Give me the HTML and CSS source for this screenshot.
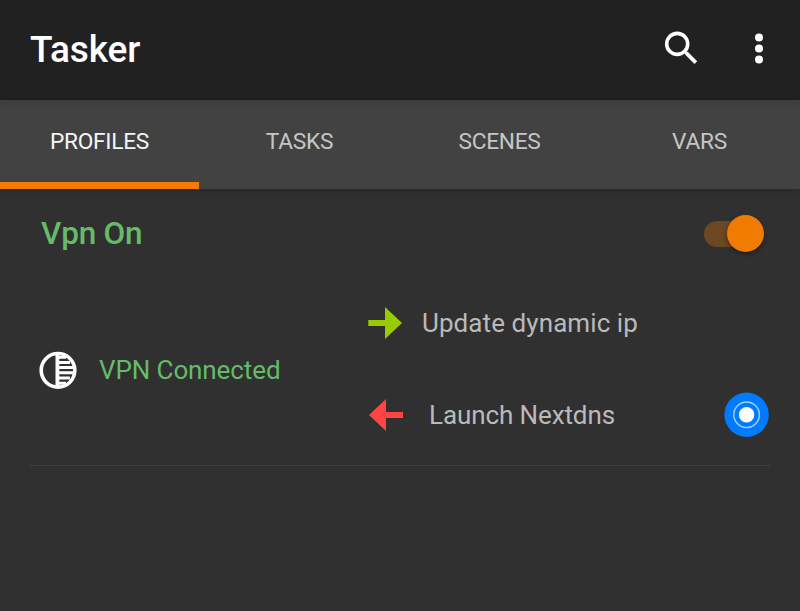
FILE: index.html
```html
<!DOCTYPE html>
<html lang="en">
<head>
<meta charset="utf-8">
<title>Tasker</title>
<link rel="stylesheet" href="styles.css">
</head>
<body>
<header class="appbar">
  <h1 class="title">Tasker</h1>
  <div class="actions">
    <svg class="search" width="36" height="36" viewBox="0 0 36 36" aria-label="Search"><circle cx="14.2" cy="13.9" r="10.5" fill="none" stroke="#fff" stroke-width="3.6"/><path d="M21.5 21.7l3.5 .4 9.2 9.2-2.7 2.7-9.2-9.2-.8-3.1z" fill="#fff"/></svg>
    <svg class="more" width="10" height="32" viewBox="0 0 10 32" fill="#fff" aria-label="More"><circle cx="5" cy="4.4" r="4"/><circle cx="5" cy="15.5" r="4"/><circle cx="5" cy="26.6" r="4"/></svg>
  </div>
</header>
<nav class="tabs">
  <a class="tab active"><span>PROFILES</span></a>
  <a class="tab"><span>TASKS</span></a>
  <a class="tab"><span>SCENES</span></a>
  <a class="tab"><span>VARS</span></a>
</nav>
<main class="profile">
  <div class="profile-head">
    <h2 class="profile-name">Vpn On</h2>
    <div class="switch"><div class="thumb"></div></div>
  </div>
  <div class="profile-body">
    <div class="context">
      <svg width="38" height="38" viewBox="0 0 38 38"><circle cx="19" cy="19.3" r="16.8" fill="none" stroke="#fff" stroke-width="3.6"/><path d="M16.5 3h3.8v32h-3.8z" fill="#fff"/><path d="M20 6.3h7M20 11.5h11M20 16.6h14M20 21.8h14M20 27h11M20 32.2h7" stroke="#fff" stroke-width="3"/></svg>
      <span class="context-name">VPN Connected</span>
    </div>
    <div class="tasks">
      <div class="task">
        <svg width="34" height="34" viewBox="0 0 34 34"><path d="M.3 14H17V1L34 17 17 33V20H.3z" fill="#99cc00"/></svg>
        <span class="task-name enter">Update dynamic ip</span>
      </div>
      <div class="task">
        <svg width="35" height="34" viewBox="0 0 35 34"><path d="M35 14H18V1L1 17 18 33V20H35z" fill="#ff4444"/></svg>
        <span class="task-name exit">Launch Nextdns</span>
        <svg class="touch" width="46" height="46" viewBox="0 0 46 46"><circle cx="22.6" cy="22.8" r="22.2" fill="#007bff"/><circle cx="22.6" cy="22.8" r="12.8" fill="none" stroke="#a6d2ff" stroke-width="1.4"/><circle cx="22.6" cy="22.8" r="7.7" fill="#fff"/></svg>
      </div>
    </div>
  </div>
</main>
</body>
</html>
```
FILE: styles.css
```css
* { box-sizing: border-box; }
body {
  margin: 0;
  height: 611px;
  overflow: hidden;
  background: #303030;
  color: #bababa;
  font-family: Roboto, "Liberation Sans", sans-serif;
}
h1, h2 { margin: 0; font-weight: 500; }
svg { display: block; flex: none; }
.appbar {
  height: 100px;
  padding: 0 36px 0 30px;
  display: flex;
  align-items: center;
  justify-content: space-between;
  background: #212121;
}
.title { font-size: 37px; line-height: 44px; letter-spacing: -.15px; color: #fff; }
.actions { display: flex; align-items: center; gap: 55px; padding-bottom: 4px; }
.more { margin-top: 1px; }
.tabs {
  height: 89px;
  display: grid;
  grid-template-columns: repeat(4, 1fr);
  background: linear-gradient(#3c3c3c, #424242 8px);
  box-shadow: 0 2px 8px rgba(0, 0, 0, .2);
}
.tab {
  display: flex;
  justify-content: center;
  padding: 28px 1px 0 0;
  font-size: 22.7px;
  line-height: 28px;
  letter-spacing: -.25px;
  color: #c6c6c6;
}
.tab.active {
  color: #f5f5f5;
  background: linear-gradient(#f57c00, #f57c00) bottom left / 199px 7.5px no-repeat;
}
.profile {
  margin: 0 30px;
  height: 277px;
  border-bottom: 1px solid #404040;
}
.profile-head {
  height: 89px;
  padding: 0 6px 0 11px;
  display: flex;
  align-items: center;
  justify-content: space-between;
}
.profile-name { font-size: 31.5px; line-height: 38px; letter-spacing: -.2px; color: #66bb6a; }
.switch {
  width: 60px;
  height: 26px;
  border-radius: 13px;
  background: #6b4722;
  display: flex;
  align-items: center;
  justify-content: flex-end;
}
.thumb {
  width: 37px;
  height: 37px;
  border-radius: 50%;
  background: #f07b00;
  box-shadow: 0 2px 4px rgba(0, 0, 0, .4);
}
.profile-body { display: grid; grid-template-columns: 338px 402px; height: 184px; }
.context { display: flex; align-items: center; gap: 22px; padding-left: 9px; }
.context-name { font-size: 26px; line-height: 32px; letter-spacing: -.1px; color: #66bb6a; }
.tasks { display: grid; grid-template-rows: 90px 94px; }
.task { display: flex; align-items: center; }
.task:last-child { padding-bottom: 0; }
.task-name { font-size: 26px; line-height: 32px; }
.enter { margin-left: 20px; letter-spacing: .08px; }
.exit { margin-left: 26px; letter-spacing: -.1px; }
.touch { margin-left: auto; }
```
